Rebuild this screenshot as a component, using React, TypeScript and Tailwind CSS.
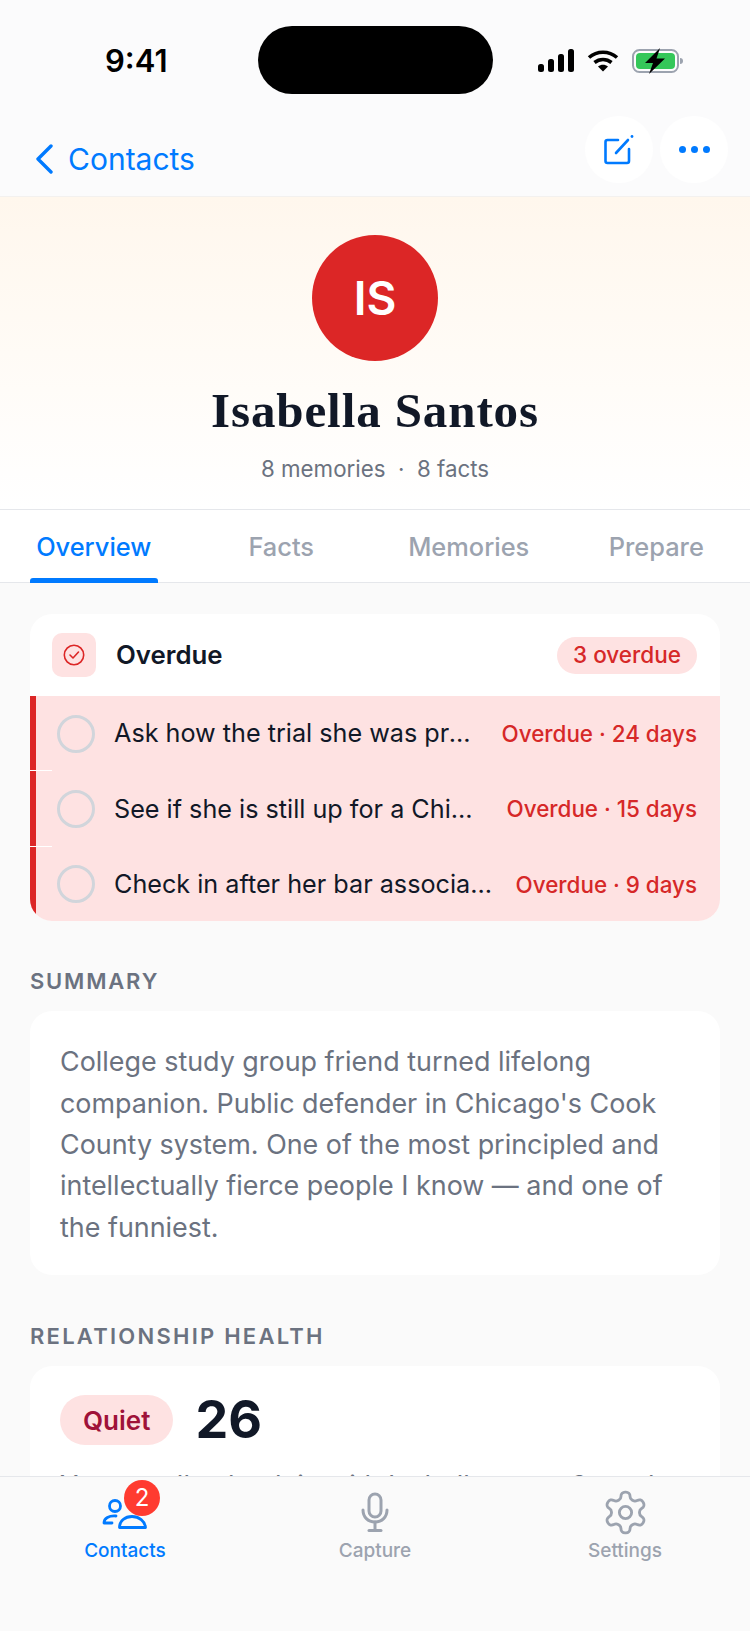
import React from "react";

const Row = ({ text, due, sep }: { text: string; due: string; sep?: boolean }) => (
  <>
    <div className="flex h-[74.4px] items-center border-l-[6px] border-[#dc2626] pl-[21px] pr-[23px] pt-[1px]">
      <div className="h-[38px] w-[38px] shrink-0 rounded-full border-[3px] border-[#d1d5db]" />
      <div className="ml-[19px] min-w-0 flex-1 truncate pt-[1px] text-[25.2px] text-[#111827]">{text}</div>
      <div className="ml-[21px] shrink-0 text-[22.4px] font-medium text-[#d62828]">{due}</div>
    </div>
    {sep && <div className="h-[1px] w-[22px] bg-white" />}
  </>
);

export default function App() {
  return (
    <div className="flex h-[1631px] w-[750px] flex-col overflow-hidden bg-[#fafafa] font-['Inter',sans-serif]">
      <div className="h-[197px] shrink-0 border-b border-[#f3f1ef] bg-[#fbfbfc]">
        <div className="grid h-[110px] grid-cols-[1fr_235px_1fr] items-start">
          <div className="ml-[105px] mt-[42px] text-[31px] font-semibold leading-[38px] text-black">9:41</div>
          <div className="mt-[26px] h-[68px] rounded-[34px] bg-black" />
          <div className="ml-[45px] mt-[48px] flex items-center gap-[13px]">
            <svg width="36" height="24" viewBox="0 0 36 24" fill="#000">
              <rect x="0" y="15" width="6" height="8" rx="2.5" />
              <rect x="10" y="10" width="6" height="13" rx="2.5" />
              <rect x="20" y="5" width="6" height="18" rx="2.5" />
              <rect x="30" y="0" width="6" height="23" rx="2.5" />
            </svg>
            <svg width="32" height="24" viewBox="0 0 32 24" fill="none" stroke="#000" strokeWidth="3.6">
              <path d="M2 8.5C10 1.5 22 1.5 30 8.5" />
              <path d="M7.5 13.5C12.5 9.5 19.5 9.5 24.5 13.5" />
              <path d="M16 22.5 L11 17.5 C14 15.3 18 15.3 21 17.5 Z" fill="#000" stroke="none" />
            </svg>
            <svg width="51" height="26" viewBox="0 0 51 26">
              <rect x="1" y="2" width="45" height="22" rx="6.5" fill="none" stroke="#9ca3af" strokeWidth="2" />
              <rect x="4" y="5" width="39" height="16" rx="4" fill="#34c759" />
              <path d="M48 10 a3 3 0 0 1 0 6 Z" fill="#9ca3af" />
              <path d="M28 0 L13 15 L21 15 L17 26 L33 10.5 L24.5 10.5 Z" fill="#000" />
            </svg>
          </div>
        </div>
        <div className="flex items-start justify-between pl-[33px] pr-[22px]">
          <div className="mt-[29px] flex items-center text-[#007aff]">
            <svg width="22" height="30" viewBox="0 0 22 30" fill="none" stroke="currentColor" strokeWidth="3.4" strokeLinecap="round" strokeLinejoin="round">
              <path d="M18 2 L5 15 L18 28" />
            </svg>
            <span className="ml-[13px] text-[30px] leading-[40px]">Contacts</span>
          </div>
          <div className="mt-[6px] flex gap-[7px]">
            <div className="flex h-[67px] w-[68px] items-center justify-center rounded-full bg-white">
              <svg width="32" height="32" viewBox="0 0 32 32" fill="none" stroke="#007aff" strokeWidth="2.6" strokeLinecap="round" strokeLinejoin="round">
                <path d="M15 6 H4.5 A2 2 0 0 0 2.5 8 V27 A2 2 0 0 0 4.5 29 H24 A2 2 0 0 0 26 27 V15" />
                <path d="M13 19 L25 6" />
                <circle cx="29" cy="2.5" r="1.4" fill="#007aff" stroke="none" />
              </svg>
            </div>
            <div className="flex h-[67px] w-[68px] items-center justify-center gap-[5px] rounded-full bg-white">
              <span className="h-[7px] w-[7px] rounded-full bg-[#007aff]" />
              <span className="h-[7px] w-[7px] rounded-full bg-[#007aff]" />
              <span className="h-[7px] w-[7px] rounded-full bg-[#007aff]" />
            </div>
          </div>
        </div>
      </div>

      <div className="flex h-[313px] shrink-0 flex-col items-center border-b border-[#e5e7eb] bg-gradient-to-b from-[#fff7ed] to-white pt-[38px]">
        <div className="flex h-[126px] w-[126px] items-center justify-center rounded-full bg-[#dc2626] text-[46px] font-semibold text-white">IS</div>
        <div className="mt-[23px] font-['Liberation_Serif',serif] text-[49px] font-bold leading-[54px] tracking-[0.9px] text-[#111827]">Isabella Santos</div>
        <div className="mt-[16px] text-[22.3px] leading-[30px] text-[#6b7280]">8 memories &nbsp;·&nbsp; 8 facts</div>
      </div>

      <div className="grid h-[73px] shrink-0 grid-cols-4 border-b border-[#e5e7eb] bg-white pt-[3px] text-[25.4px] font-medium text-[#9ca3af]">
        <div className="relative flex items-center justify-center text-[#007aff]">
          Overview
          <div className="absolute -bottom-px left-[30px] h-[5px] w-[128px] rounded-t-[3px] bg-[#007aff]" />
        </div>
        <div className="flex items-center justify-center">Facts</div>
        <div className="flex items-center justify-center">Memories</div>
        <div className="flex items-center justify-center">Prepare</div>
      </div>

      <div className="min-h-0 flex-1 overflow-hidden px-[30px] pt-[31px]">
        <div className="overflow-hidden rounded-[22px] bg-white">
          <div className="flex h-[82px] items-center pl-[22px] pr-[23px]">
            <div className="flex h-[44px] w-[44px] items-center justify-center rounded-[10px] bg-[#fee2e2]">
              <svg width="22" height="22" viewBox="0 0 22 22" fill="none" stroke="#dc2626" strokeWidth="1.6" strokeLinecap="round" strokeLinejoin="round">
                <circle cx="11" cy="11" r="9.7" />
                <path d="M7 11 L10 14 L15.5 8" />
              </svg>
            </div>
            <div className="ml-[20px] flex-1 text-[25.8px] font-semibold text-[#111827]">Overdue</div>
            <div className="flex h-[37px] items-center rounded-full bg-[#fee2e2] px-[16px] text-[22.5px] font-medium text-[#d62828]">3 overdue</div>
          </div>
          <div className="bg-[#fee2e2]">
            <Row text="Ask how the trial she was prepping for went" due="Overdue · 24 days" sep />
            <Row text="See if she is still up for a Chicago weekend" due="Overdue · 15 days" sep />
            <Row text="Check in after her bar association dinner talk" due="Overdue · 9 days" />
          </div>
        </div>

        <div className="mt-[47px] text-[22px] font-semibold leading-[26px] tracking-[1.8px] text-[#6b7280]">SUMMARY</div>
        <div className="mt-[17px] rounded-[22px] bg-white px-[30px] pb-[27px] pt-[30px] text-[26.9px] leading-[41.4px] text-[#6b7280]">
          College study group friend turned lifelong companion. Public defender in Chicago's Cook County system. One of the most principled and intellectually fierce people I know — and one of the funniest.
        </div>

        <div className="mt-[48px] text-[22px] font-semibold leading-[26px] tracking-[2.25px] text-[#6b7280]">RELATIONSHIP HEALTH</div>
        <div className="mt-[17px] rounded-[22px] bg-white px-[30px] pt-[29px]">
          <div className="flex items-center">
            <div className="flex h-[50px] items-center rounded-full bg-[#fee2e2] px-[23px] text-[26px] font-semibold text-[#9f1239]">Quiet</div>
            <div className="ml-[22px] text-[52px] font-bold leading-[50px] text-[#111827]">26</div>
          </div>
          <div className="mt-[20px] text-[26.9px] leading-[40px] text-[#6b7280]">You usually check in with Isabella every 3 weeks</div>
        </div>
      </div>

      <div className="grid h-[155px] shrink-0 grid-cols-3 border-t border-[#e5e7eb] bg-[#fafafa] text-[19px] font-medium text-[#9ca3af]">
        <div className="flex flex-col items-center pt-[12px] text-[#007aff]">
          <div className="relative h-[46px] w-[46px]">
            <svg width="46" height="46" viewBox="0 0 46 46" fill="none" stroke="currentColor" strokeWidth="2.8" strokeLinecap="round" strokeLinejoin="round">
              <circle cx="13" cy="17" r="5.5" />
              <path d="M14 27 C7 26.5 2 29 2 34 H10" />
              <path d="M17.5 38.5 C17.5 32 23 27.5 30 27.5 C37 27.5 43 32 43.5 38.5 Z" />
            </svg>
            <div className="absolute -top-[9px] left-[22px] flex h-[36px] w-[36px] items-center justify-center rounded-full bg-[#ff3b30] text-[24px] font-normal text-white">2</div>
          </div>
          <div className="mt-[4px] leading-[24px]">Contacts</div>
        </div>
        <div className="flex flex-col items-center pt-[12px]">
          <svg width="46" height="46" viewBox="0 0 46 46" fill="none" stroke="currentColor" strokeWidth="3" strokeLinecap="round" strokeLinejoin="round">
            <rect x="17" y="5" width="12" height="23" rx="6" />
            <path d="M11 21 C11 28 16 33 23 33 C30 33 35 28 35 21" />
            <path d="M23 33 V41" />
            <path d="M17 41.5 H29" />
          </svg>
          <div className="mt-[4px] leading-[24px]">Capture</div>
        </div>
        <div className="flex flex-col items-center pt-[12px]">
          <svg width="49" height="49" viewBox="0 0 24 24" className="-my-[1.5px]" fill="none" stroke="currentColor" strokeWidth="1.4" strokeLinecap="round" strokeLinejoin="round">
            <path d="M12.22 2h-.44a2 2 0 0 0-2 2v.18a2 2 0 0 1-1 1.73l-.43.25a2 2 0 0 1-2 0l-.15-.08a2 2 0 0 0-2.73.73l-.22.38a2 2 0 0 0 .73 2.73l.15.1a2 2 0 0 1 1 1.72v.51a2 2 0 0 1-1 1.74l-.15.09a2 2 0 0 0-.73 2.73l.22.38a2 2 0 0 0 2.73.73l.15-.08a2 2 0 0 1 2 0l.43.25a2 2 0 0 1 1 1.73V20a2 2 0 0 0 2 2h.44a2 2 0 0 0 2-2v-.18a2 2 0 0 1 1-1.73l.43-.25a2 2 0 0 1 2 0l.15.08a2 2 0 0 0 2.73-.73l.22-.39a2 2 0 0 0-.73-2.73l-.15-.08a2 2 0 0 1-1-1.74v-.5a2 2 0 0 1 1-1.74l.15-.09a2 2 0 0 0 .73-2.73l-.22-.38a2 2 0 0 0-2.73-.73l-.15.08a2 2 0 0 1-2 0l-.43-.25a2 2 0 0 1-1-1.73V4a2 2 0 0 0-2-2z" />
            <circle cx="12" cy="12" r="3" />
          </svg>
          <div className="mt-[4px] leading-[24px]">Settings</div>
        </div>
      </div>
    </div>
  );
}
